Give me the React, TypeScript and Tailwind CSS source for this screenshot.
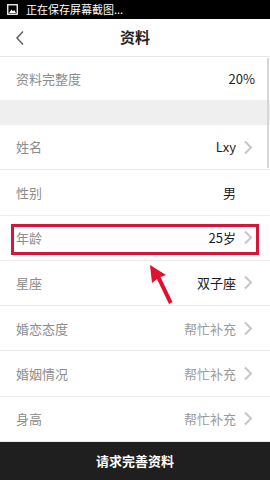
import React from "react";

type Row = { label: string; value: string; muted?: boolean; arrow?: boolean };

const rows: Row[] = [
  { label: "姓名", value: "Lxy", arrow: true },
  { label: "性别", value: "男" },
  { label: "年龄", value: "25岁", arrow: true },
  { label: "星座", value: "双子座", arrow: true },
  { label: "婚恋态度", value: "帮忙补充", muted: true, arrow: true },
  { label: "婚姻情况", value: "帮忙补充", muted: true, arrow: true },
  { label: "身高", value: "帮忙补充", muted: true, arrow: true },
];

function Chevron() {
  return (
    <svg width="10" height="15" viewBox="0 0 10 15" className="ml-[7px]">
      <path d="M2 1.5 L8 7.5 L2 13.5" fill="none" stroke="#c6c6c6" strokeWidth="2" />
    </svg>
  );
}

export default function App() {
  return (
    <div
      className="relative w-[270px] h-[480px] overflow-hidden bg-white flex flex-col"
      style={{ fontFamily: '"Noto Sans CJK SC", "Noto Sans", sans-serif' }}
    >
      {/* status bar */}
      <div className="h-[19px] bg-black flex items-center px-[7px] gap-[8px]">
        <svg width="11" height="11" viewBox="0 0 11 11">
          <rect x="0.75" y="0.75" width="9.5" height="9.5" fill="none" stroke="#fff" strokeWidth="1.3" />
          <path d="M2 9 L4.5 5.5 L6 7.2 L7.2 6 L9 9 Z" fill="#fff" />
        </svg>
        <span className="text-[11px] leading-none text-white">正在保存屏幕截图...</span>
      </div>

      {/* header */}
      <div className="relative h-[38px] flex items-center justify-center border-b border-[#e6e6e6]">
        <svg width="10" height="16" viewBox="0 0 10 16" className="absolute left-[15px] top-[11px]">
          <path d="M8 1.5 L2 8 L8 14.5" fill="none" stroke="#666" strokeWidth="1.6" />
        </svg>
        <span className="text-[15px] font-bold text-[#222]">资料</span>
      </div>

      {/* completeness */}
      <div className="h-[43px] flex items-center justify-between pl-[16px] pr-[15px]">
        <span className="text-[13px] text-[#8c8c8c]">资料完整度</span>
        <span className="text-[13px] text-[#222]">20%</span>
      </div>
      <div className="h-[25px] bg-[#efefef]" />

      {/* rows */}
      <div className="flex flex-col">
        {rows.map((r) => (
          <div
            key={r.label}
            className="h-[45.3px] flex items-center justify-between pl-[16px] pr-[17px] border-b border-[#ececec]"
          >
            <span className="text-[13px] text-[#8c8c8c]">{r.label}</span>
            <div className="flex items-center">
              <span className={r.muted ? "text-[13px] text-[#9a9a9a]" : "text-[13px] text-[#1c1c1c]"}>
                {r.value}
              </span>
              {r.arrow ? <Chevron /> : <span className="w-[17px]" />}
            </div>
          </div>
        ))}
      </div>

      {/* bottom button */}
      <div className="mt-auto h-[38px] bg-[#1f1f1f] flex items-center justify-center">
        <span className="text-[13px] font-bold text-white">请求完善资料</span>
      </div>

      {/* scrollbar */}
      <div className="absolute right-[1px] top-[58px] w-[2px] h-[110px] bg-[#d6d6d6]" />

      {/* annotation box */}
      <div className="absolute left-[11px] top-[224px] w-[248px] h-[31px] border-[3px] border-[#d3173b]" />

      {/* annotation arrow */}
      <svg width="40" height="50" viewBox="0 0 40 50" className="absolute left-[144px] top-[260px]">
        <path d="M6 5 L8 23 L13 19 L25 44 L28.5 42 L16.5 17 L22 15 Z" fill="#e0102f" />
      </svg>
    </div>
  );
}
